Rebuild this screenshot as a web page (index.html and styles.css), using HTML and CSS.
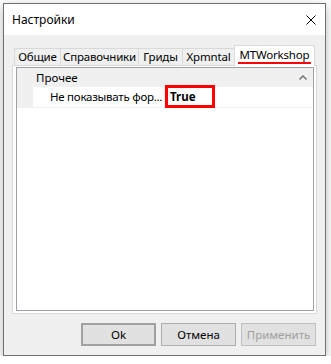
FILE: index.html
```html
<!DOCTYPE html>
<html lang="ru">
<head>
    <meta charset="UTF-8">
    <title>Настройки</title>
    <link rel="stylesheet" href="styles.css">
</head>
<body>

<div class="window">
    <div class="titlebar">
        <span class="title">Настройки</span>
        <svg class="close" width="10" height="10" viewBox="0 0 10 10">
            <path d="M0.5 0.5 L9.5 9.5 M9.5 0.5 L0.5 9.5" stroke="#000" stroke-width="1" fill="none"/>
        </svg>
    </div>

    <div class="content">
        <div class="tabs">
            <div class="tab tab-common">Общие</div>
            <div class="tab tab-refs">Справочники</div>
            <div class="tab tab-grids">Гриды</div>
            <div class="tab tab-xpm">Xpmntal</div>
            <div class="tab tab-mtw active"><span class="marked">MTWorkshop</span></div>
        </div>

        <div class="panel">
            <div class="grid">
                <div class="category">
                    <span>Прочее</span>
                    <svg class="chevron" width="8" height="5" viewBox="0 0 8 5">
                        <path d="M0.5 4.5 L4 1 L7.5 4.5" stroke="#6d6d6d" stroke-width="1.4" fill="none"/>
                    </svg>
                </div>
                <div class="row">
                    <div class="gutter"></div>
                    <div class="label">Не показывать фор...</div>
                    <div class="value">
                        True
                        <span class="mark"></span>
                    </div>
                </div>
                <div class="empty"></div>
            </div>
        </div>

        <!-- Dialog buttons -->
        <div class="buttons">
            <button class="btn default">Ok</button>
            <button class="btn">Отмена</button>
            <button class="btn" disabled>Применить</button>
        </div>
    </div>
</div>

</body>
</html>
```

FILE: styles.css
```css
body {
    margin: 0;
    background-color: #ffffff;
    font-family: "Noto Sans", "Open Sans", sans-serif;
    font-size: 11.5px;
    color: #000;
}

.window {
    margin: 3px 0 0 3px;
    width: 323px;
    height: 353px;
    box-sizing: border-box;
    border: 1px solid #707070;
    background-color: #f0f0f0;
    box-shadow: 0 3px 10px rgba(0, 0, 0, 0.28);
    display: flex;
    flex-direction: column;
}

.titlebar {
    height: 31px;
    background-color: #fff;
    display: flex;
    align-items: center;
    justify-content: space-between;
    padding: 0 9px 0 8px;
}

.title {
    font-size: 12px;
}

.close {
    display: block;
}

.content {
    flex: 1;
    display: flex;
    flex-direction: column;
    padding: 9px 8px 0 8px;
}

/* Tab strip */
.tabs {
    display: flex;
    align-items: flex-end;
    padding-left: 2px;
    height: 21px;
    position: relative;
    z-index: 1;
}

.tab {
    height: 17px;
    box-sizing: border-box;
    border: 1px solid #d9d9d9;
    border-bottom: none;
    margin-left: -1px;
    line-height: 16px;
    text-align: center;
    letter-spacing: -0.2px;
    background-color: #f0f0f0;
    white-space: nowrap;
}

.tab:first-child {
    margin-left: 0;
}

.tab-common { width: 47px; }
.tab-refs { width: 79px; }
.tab-grids { width: 45px; }
.tab-xpm { width: 53px; }
.tab-mtw { width: 81px; }

.tab.active {
    height: 21px;
    background-color: #fff;
    line-height: 18px;
    margin-bottom: -1px;
}

.marked {
    display: inline-block;
    padding: 0 2px;
    line-height: 15px;
    border-bottom: 2px solid #ff0000;
}

/* Tab page */
.panel {
    height: 249px;
    box-sizing: border-box;
    border: 1px solid #d9d9d9;
    background-color: #fff;
    padding: 1px 2px 2px 3px;
}

.grid {
    height: 100%;
    box-sizing: border-box;
    border: 1px solid #a0a0a8;
    display: flex;
    flex-direction: column;
}

.category {
    height: 19px;
    background-color: #f0f0f0;
    display: flex;
    align-items: center;
    justify-content: space-between;
    padding: 0 6px 0 19px;
}

.row {
    display: flex;
    height: 20px;
    border-bottom: 1px solid #f0f0f0;
}

.gutter {
    width: 16px;
    background-color: #f0f0f0;
}

.label {
    width: 132px;
    padding-left: 17px;
    box-sizing: border-box;
    line-height: 20px;
    letter-spacing: -0.25px;
    border-right: 1px solid #f0f0f0;
    white-space: nowrap;
    overflow: hidden;
}

.value {
    position: relative;
    padding-left: 5px;
    line-height: 20px;
    font-weight: bold;
}

.mark {
    position: absolute;
    left: 0;
    top: -2px;
    width: 50px;
    height: 23px;
    box-sizing: border-box;
    border: 3px solid #ff0000;
}

/* Dialog buttons */
.buttons {
    display: flex;
    justify-content: flex-end;
    gap: 5px;
    padding: 9px 1px 0 0;
}

.btn {
    width: 75px;
    height: 23px;
    background-color: #e1e1e1;
    border: 1px solid #adadad;
    font-family: inherit;
    font-size: 11.5px;
    color: #000;
    padding: 0;
}

.btn.default {
    border: 2px solid #a0a0a0;
}

.btn:disabled {
    color: #a0a0a0;
    border-color: #bfbfbf;
}
```
